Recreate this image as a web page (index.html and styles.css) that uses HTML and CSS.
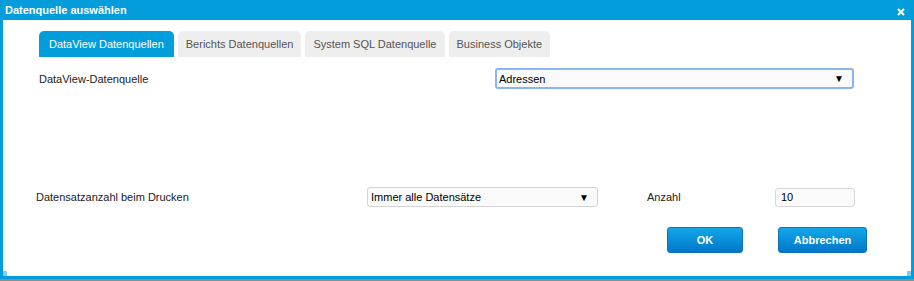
FILE: index.html
```html
<!DOCTYPE html>
<html lang="de">
<head>
    <meta charset="UTF-8">
    <title>Datenquelle auswählen</title>
    <link rel="stylesheet" href="styles.css">
</head>
<body>
    <div class="dialog">
        <div class="titlebar">
            <span class="title">Datenquelle auswählen</span>
            <svg class="close" width="8" height="8" viewBox="0 0 8 8">
                <path d="M1 1 L7 7 M7 1 L1 7" stroke="#fff" stroke-width="2"/>
            </svg>
        </div>

        <div class="body">
            <div class="tabs">
                <div class="tab active">DataView Datenquellen</div>
                <div class="tab">Berichts Datenquellen</div>
                <div class="tab">System SQL Datenquelle</div>
                <div class="tab">Business Objekte</div>
            </div>

            <div class="row source-row">
                <span class="label">DataView-Datenquelle</span>
                <div class="select focus wide">
                    <span>Adressen</span>
                    <span class="arrow">&#9660;</span>
                </div>
            </div>

            <div class="row print-row">
                <span class="label print-label">Datensatzanzahl beim Drucken</span>
                <div class="select narrow">
                    <span>Immer alle Datensätze</span>
                    <span class="arrow">&#9660;</span>
                </div>
                <span class="label count-label">Anzahl</span>
                <div class="input">10</div>
            </div>

            <div class="buttons">
                <button class="btn ok">OK</button>
                <button class="btn cancel">Abbrechen</button>
            </div>

            <span class="grip left"></span>
            <span class="grip right"></span>
        </div>
    </div>
    <div class="taskbar"></div>
</body>
</html>
```

FILE: styles.css
```css
body {
    margin: 0;
    padding: 0;
    font-family: 'Liberation Sans', Arial, sans-serif;
    font-size: 11px;
    color: #222;
    background: #fff;
}
.dialog {
    background: #049ddb;
    padding: 0 3px 3px 3px;
    height: 276px;
}
.titlebar {
    height: 20px;
    display: flex;
    align-items: center;
    justify-content: space-between;
    padding: 0 6px 0 2px;
}
.title {
    color: #fff;
    font-weight: bold;
    font-size: 11px;
}
.close {
    margin-top: 4px;
}
.body {
    position: relative;
    background: #fff;
    height: 256px;
    padding: 11px 0 0 36px;
    box-sizing: border-box;
}
.tabs {
    display: flex;
    gap: 4px;
}
.tab {
    height: 26px;
    line-height: 26px;
    padding: 0 8px;
    background: #eeeeee;
    color: #555;
    border-radius: 5px 5px 0 0;
}
.tab.active {
    background: #029ddb;
    color: #fff;
    padding: 0 10px;
}
.row {
    display: flex;
    align-items: center;
}
.source-row {
    margin-top: 11px;
}
.source-row .label {
    width: 456px;
}
.select {
    display: flex;
    justify-content: space-between;
    align-items: center;
    box-sizing: border-box;
    border: 1px solid #d4d4d4;
    border-radius: 3px;
    background: #fafafa;
    padding: 0 8px 0 3px;
    color: #000;
}
.select.focus {
    border: 2px solid #8ab6ee;
    padding-left: 2px;
}
.wide {
    width: 359px;
    height: 21px;
}
.narrow {
    width: 231px;
    height: 20px;
}
.arrow {
    font-size: 10px;
}
.print-row {
    margin: 98px 0 0 -3px;
}
.print-label {
    width: 331px;
}
.count-label {
    width: 128px;
    margin-left: 49px;
}
.input {
    box-sizing: border-box;
    width: 80px;
    height: 19px;
    line-height: 17px;
    border: 1px solid #d8d8d8;
    border-radius: 3px;
    background: #fafafa;
    padding-left: 5px;
    color: #000;
}
.buttons {
    display: flex;
    gap: 35px;
    margin: 20px 0 0 628px;
}
.btn {
    height: 26px;
    font-family: inherit;
    font-size: 11px;
    font-weight: bold;
    color: #fff;
    border: 1px solid #0a72bf;
    border-radius: 3px;
    background: linear-gradient(#13a7e8, #0077c9);
    padding: 0;
}
.ok {
    width: 76px;
}
.cancel {
    width: 89px;
}
.grip {
    position: absolute;
    bottom: 0;
    width: 4px;
    height: 5px;
    background: #7ccff0;
}
.grip.left {
    left: 0;
}
.grip.right {
    right: 0;
}
.taskbar {
    height: 2px;
    background: #8c8c8c;
}
```
